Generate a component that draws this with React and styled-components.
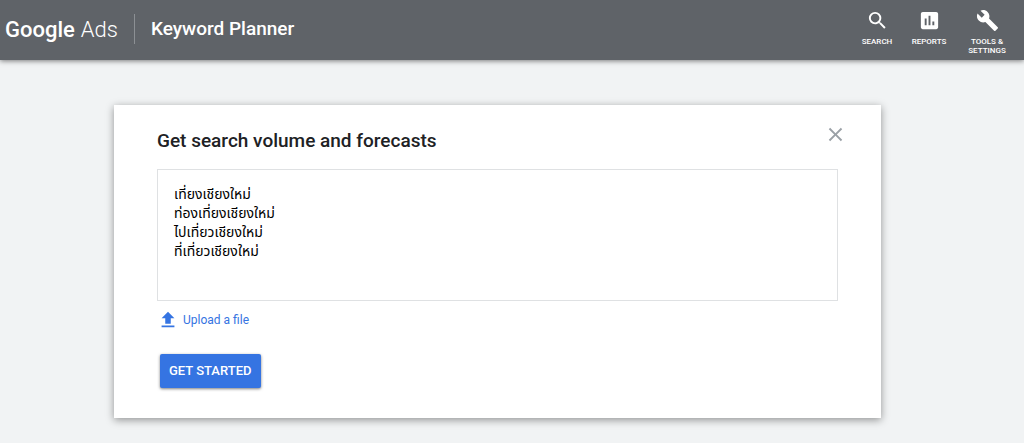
import React from 'react';
import styled, { createGlobalStyle } from 'styled-components';
import { MdSearch, MdAssessment, MdBuild, MdFileUpload, MdClose } from 'react-icons/md';

const GlobalStyle = createGlobalStyle`
  *, *::before, *::after { box-sizing: border-box; }
  body {
    margin: 0;
    background: #f1f3f4;
    color: #202124;
    font-family: Roboto, "Liberation Sans", sans-serif;
  }
  button { font-family: inherit; cursor: pointer; }
`;

const Header = styled.header`
  display: flex;
  align-items: flex-start;
  min-height: 60px;
  padding: 0 5px;
  background: #5f6368;
  color: #fff;
  box-shadow: 0 1px 5px rgba(0, 0, 0, 0.5);
`;

const Brand = styled.a`
  display: flex;
  align-items: center;
  height: 60px;
  gap: 6px;
  color: #fff;
  text-decoration: none;
  font-size: 22px;
  line-height: 28px;
`;

const BrandName = styled.span`
  font-weight: ${({ $strong }) => ($strong ? 500 : 300)};
`;

const Product = styled.h1`
  display: flex;
  align-items: center;
  height: 30px;
  margin: 14px 0 0 16px;
  padding-left: 16px;
  border-left: 1px solid #8c9094;
  font-size: 19px;
  line-height: 24px;
  font-weight: 500;
`;

const Nav = styled.nav`
  display: flex;
  align-items: flex-start;
  margin-left: auto;
  padding-top: 9px;
`;

const NavButton = styled.button`
  display: flex;
  flex-direction: column;
  align-items: center;
  gap: 5px;
  width: ${({ $wide }) => ($wide ? 64 : 52)}px;
  padding: 0 ${({ $wide }) => ($wide ? 10 : 0)}px;
  border: 0;
  background: none;
  color: #fff;
  font-size: 8px;
  line-height: 9px;
  font-weight: 500;
  text-align: center;
  text-transform: uppercase;

  svg { width: 23px; height: 23px; }
`;

const Card = styled.main`
  margin: 45px 143px 25px 114px;
  padding: 20px 43px 30px;
  background: #fff;
  box-shadow: 0 2px 8px rgba(0, 0, 0, 0.4);
`;

const CardHeader = styled.div`
  display: flex;
  align-items: flex-start;
  justify-content: space-between;
  margin-bottom: 13px;
`;

const Title = styled.h2`
  margin: 0;
  font-size: 19px;
  line-height: 31px;
  font-weight: 500;
`;

const CloseButton = styled.button`
  display: flex;
  margin: -2px -9px 0 0;
  padding: 0;
  border: 0;
  background: none;
  color: #9aa0a6;

  svg { width: 23px; height: 23px; }
`;

const Keywords = styled.textarea`
  display: block;
  width: 100%;
  height: 132px;
  padding: 15px 16px;
  border: 1px solid #dfe1e3;
  outline: 0;
  resize: none;
  background: #fff;
  color: #000;
  font-family: Roboto, "Noto Sans Thai", sans-serif;
  font-size: 14px;
  line-height: 19px;
`;

const UploadButton = styled.button`
  display: flex;
  align-items: center;
  gap: 4px;
  margin-top: 8px;
  padding: 0;
  border: 0;
  background: none;
  color: #3574e2;
  font-size: 12px;
  line-height: 22px;

  svg { width: 22px; height: 22px; }
`;

const PrimaryButton = styled.button`
  display: block;
  margin: 23px 0 0 3px;
  padding: 0 9px;
  border: 0;
  border-radius: 2px;
  background: #3574e2;
  color: #fff;
  font-size: 13px;
  line-height: 34px;
  font-weight: 500;
  text-transform: uppercase;
  box-shadow: 0 1px 3px rgba(0, 0, 0, 0.5);
`;

const keywords = ['เที่ยงเชียงใหม่', 'ท่องเที่ยงเชียงใหม่', 'ไปเที่ยวเชียงใหม่', 'ที่เที่ยวเชียงใหม่'];

export default function App() {
  return (
    <>
      <GlobalStyle />
      <Header>
        <Brand href="#">
          <BrandName $strong>Google</BrandName>
          <BrandName>Ads</BrandName>
        </Brand>
        <Product>Keyword Planner</Product>
        <Nav>
          <NavButton type="button"><MdSearch />Search</NavButton>
          <NavButton type="button"><MdAssessment />Reports</NavButton>
          <NavButton type="button" $wide><MdBuild />Tools &amp; Settings</NavButton>
        </Nav>
      </Header>
      <Card>
        <CardHeader>
          <Title id="forecast-title">Get search volume and forecasts</Title>
          <CloseButton type="button" aria-label="Close"><MdClose /></CloseButton>
        </CardHeader>
        <Keywords aria-labelledby="forecast-title" spellCheck={false} defaultValue={keywords.join('\n')} />
        <UploadButton type="button"><MdFileUpload />Upload a file</UploadButton>
        <PrimaryButton type="button">Get started</PrimaryButton>
      </Card>
    </>
  );
}
